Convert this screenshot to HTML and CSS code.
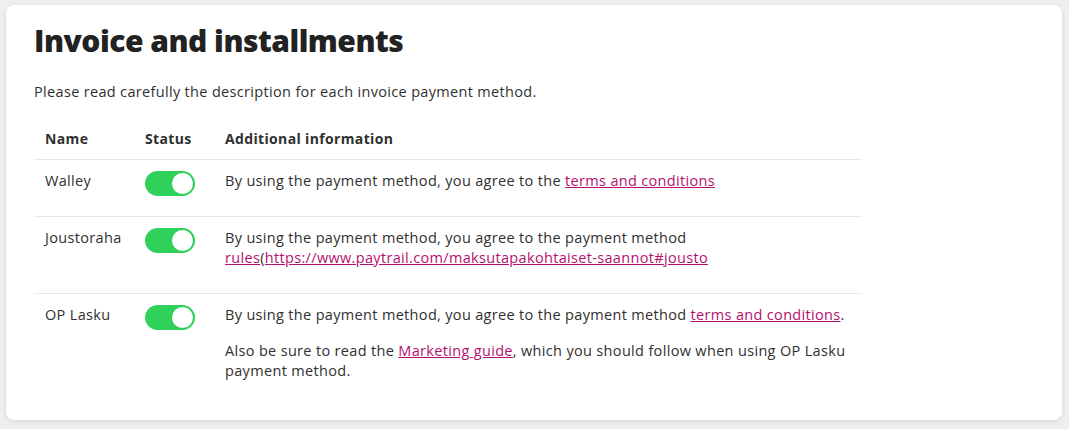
FILE: index.html
```html
<!DOCTYPE html>
<html lang="en">
<head>
    <meta charset="UTF-8">
    <meta name="viewport" content="width=device-width, initial-scale=1.0">
    <title>Invoice and installments</title>
    <link rel="stylesheet" href="styles.css">
</head>
<body>
    <div class="card">
        <h1>Invoice and installments</h1>
        <p class="intro">Please read carefully the description for each invoice payment method.</p>

        <table class="methods">
            <thead>
                <tr>
                    <th class="col-name">Name</th>
                    <th class="col-status">Status</th>
                    <th>Additional information</th>
                </tr>
            </thead>
            <tbody>
                <tr>
                    <td>Walley</td>
                    <td><span class="toggle on"></span></td>
                    <td>
                        <p>By using the payment method, you agree to the <a href="#">terms and conditions</a></p>
                    </td>
                </tr>
                <tr>
                    <td>Joustoraha</td>
                    <td><span class="toggle on"></span></td>
                    <td>
                        <p>By using the payment method, you agree to the payment method <a href="#">rules</a>(<a href="#">https://www.paytrail.com/maksutapakohtaiset-saannot#jousto</a></p>
                    </td>
                </tr>
                <tr>
                    <td>OP Lasku</td>
                    <td><span class="toggle on"></span></td>
                    <td>
                        <p>By using the payment method, you agree to the payment method <a href="#">terms and conditions</a>.</p>
                        <p>Also be sure to read the <a href="#">Marketing guide</a>, which you should follow when using OP Lasku payment method.</p>
                    </td>
                </tr>
            </tbody>
        </table>
    </div>
</body>
</html>
```

FILE: styles.css
```css
body {
    margin: 0;
    padding: 5px 7px 9px 6px;
    background: #efefef;
    font-family: "Open Sans", Arial, sans-serif;
    color: #303030;
}
.card {
    background: #fff;
    border-radius: 8px;
    box-shadow: 0 1px 4px rgba(0, 0, 0, 0.12);
    padding: 22px 28px 12px 28px;
    height: 381px;
}
h1 {
    margin: 0;
    font-size: 30px;
    line-height: 28px;
    font-weight: 800;
    letter-spacing: -0.5px;
    color: #222;
}
.intro {
    margin: 27px 0 0 0;
    font-size: 14.5px;
    line-height: 20px;
    letter-spacing: 0.33px;
}
.methods {
    margin-top: 27px;
    width: 828px;
    border-collapse: collapse;
    font-size: 14.5px;
    line-height: 20px;
    letter-spacing: 0.33px;
}
.methods th {
    text-align: left;
    font-weight: 700;
    font-size: 14px;
    letter-spacing: 0.35px;
    padding: 0 11px 10px 11px;
    border-bottom: 1px solid #e8e8e8;
}
.methods td {
    vertical-align: top;
    padding: 11px 11px 9px 11px;
    border-bottom: 1px solid #e8e8e8;
}
.methods tr:last-child td {
    border-bottom: none;
}
.col-name {
    width: 78px;
}
.col-status {
    width: 58px;
}
.methods p {
    margin: 0 0 16px 0;
}
.methods a {
    color: #b5106f;
    text-decoration: underline;
}
.toggle {
    display: block;
    position: relative;
    width: 50px;
    height: 25px;
    border-radius: 13px;
    background: #ccc;
}
.toggle.on {
    background: #30d15a;
}
.toggle::after {
    content: "";
    position: absolute;
    top: 2px;
    left: 2px;
    width: 21px;
    height: 21px;
    border-radius: 50%;
    background: #fff;
}
.toggle.on::after {
    left: 27px;
}
```
